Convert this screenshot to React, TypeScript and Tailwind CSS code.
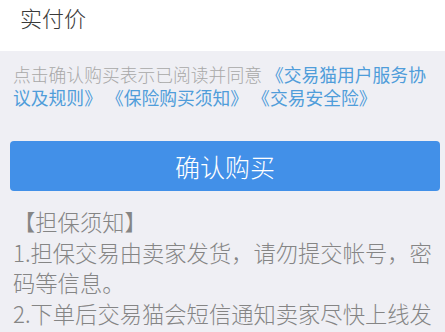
const FONT = '"Noto Sans CJK SC", "Noto Sans", sans-serif';

export default function App() {
  return (
    <div className="w-[445px] h-[332px] overflow-hidden bg-[#efeff4] font-light" style={{ fontFamily: FONT }}>
      {/* 实付价 */}
      <div className="h-[51px] bg-white pl-[20px]">
        <div className="text-[22px] leading-[34px] text-[#3a3a3a]">实付价</div>
      </div>

      {/* 协议 */}
      <div className="px-[13px] pt-[12px] text-[17.8px] leading-[23px] text-[#a8a8a8]">
        <div className="whitespace-nowrap">
          点击确认购买表示已阅读并同意 <span className="font-normal text-[#4f9dda]">《交易猫用户服务协</span>
        </div>
        <div className="whitespace-nowrap font-normal text-[#4f9dda]">
          议及规则》 《保险购买须知》 《交易安全险》
        </div>
      </div>

      {/* 确认购买 */}
      <div className="pl-[10px] pr-[5px] mt-[32px]">
        <button className="w-full h-[50px] rounded-[4px] bg-[#4290e8] text-white text-[25px] leading-none font-light">
          确认购买
        </button>
      </div>

      {/* 担保须知 */}
      <div className="px-[13px] mt-[15px] text-[22.3px] leading-[30.5px] text-[#858585]">
        <div>【担保须知】</div>
        <div className="whitespace-nowrap">1.担保交易由卖家发货，请勿提交帐号，密</div>
        <div>码等信息。</div>
        <div className="whitespace-nowrap">2.下单后交易猫会短信通知卖家尽快上线发</div>
      </div>
    </div>
  );
}
